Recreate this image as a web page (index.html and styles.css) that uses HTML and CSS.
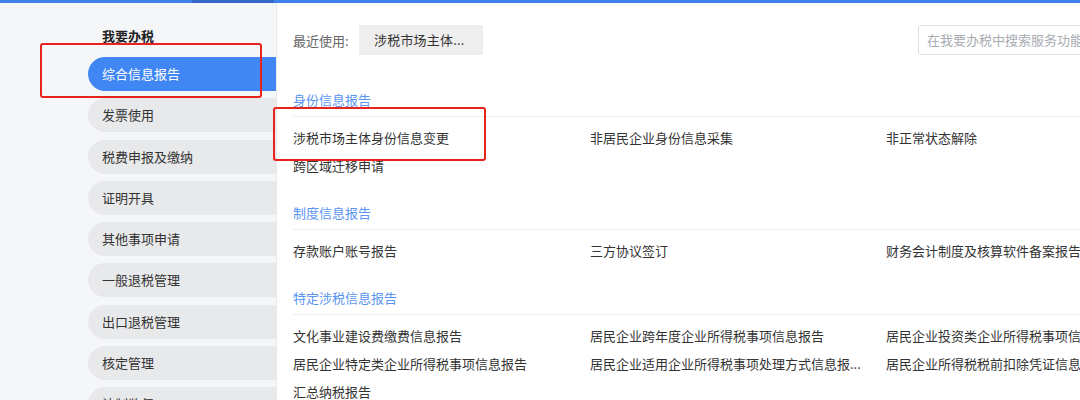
FILE: index.html
```html
<!DOCTYPE html>
<html lang="zh-CN">
<head>
<meta charset="utf-8">
<title>我要办税</title>
<link rel="stylesheet" href="styles.css">
</head>
<body>
<div class="topbar"><div class="topbar-mark"></div></div>
<div class="page">
  <aside class="sidebar">
    <div class="side-title">我要办税</div>
    <ul class="nav">
      <li class="nav-item active">综合信息报告</li>
      <li class="nav-item">发票使用</li>
      <li class="nav-item">税费申报及缴纳</li>
      <li class="nav-item">证明开具</li>
      <li class="nav-item">其他事项申请</li>
      <li class="nav-item">一般退税管理</li>
      <li class="nav-item">出口退税管理</li>
      <li class="nav-item">核定管理</li>
      <li class="nav-item">法制监督</li>
    </ul>
  </aside>
  <main class="main">
    <div class="recent-row">
      <span class="recent-label">最近使用:</span>
      <span class="recent-btn">涉税市场主体...</span>
      <div class="search">在我要办税中搜索服务功能</div>
    </div>

    <section class="group first">
      <h3 class="group-title">身份信息报告</h3>
      <div class="items">
        <span class="item">涉税市场主体身份信息变更</span>
        <span class="item">非居民企业身份信息采集</span>
        <span class="item">非正常状态解除</span>
        <span class="item">跨区域迁移申请</span>
      </div>
    </section>

    <section class="group">
      <h3 class="group-title">制度信息报告</h3>
      <div class="items">
        <span class="item">存款账户账号报告</span>
        <span class="item">三方协议签订</span>
        <span class="item">财务会计制度及核算软件备案报告</span>
      </div>
    </section>

    <section class="group">
      <h3 class="group-title">特定涉税信息报告</h3>
      <div class="items">
        <span class="item">文化事业建设费缴费信息报告</span>
        <span class="item">居民企业跨年度企业所得税事项信息报告</span>
        <span class="item">居民企业投资类企业所得税事项信息报告</span>
        <span class="item">居民企业特定类企业所得税事项信息报告</span>
        <span class="item">居民企业适用企业所得税事项处理方式信息报...</span>
        <span class="item">居民企业所得税税前扣除凭证信息报告</span>
        <span class="item">汇总纳税报告</span>
      </div>
    </section>
  </main>
</div>
<div class="mark mark-nav"></div>
<div class="mark mark-item"></div>
</body>
</html>
```

FILE: styles.css
```css
* { box-sizing: border-box; margin: 0; padding: 0; }

html, body {
  width: 1080px;
  height: 400px;
  overflow: hidden;
}

body {
  font-family: "Noto Sans CJK SC", "Noto Sans", "Liberation Sans", sans-serif;
  font-size: 13px;
  color: #333;
  background: #fff;
  position: relative;
}

.topbar {
  height: 3px;
  background: #4080ea;
  position: relative;
}

.topbar-mark {
  position: absolute;
  left: 192px;
  top: 0;
  width: 82px;
  height: 3px;
  background: #3467c6;
}

.page {
  display: flex;
  height: 397px;
}

.sidebar {
  width: 277px;
  flex: none;
  background: #f5f6f8;
  border-right: 1px solid #e6e7ea;
  padding-top: 23px;
  padding-left: 88px;
}

.side-title {
  font-weight: 700;
  font-size: 13px;
  line-height: 20px;
  padding-left: 14px;
  color: #222;
  margin-bottom: 11px;
}

.nav {
  list-style: none;
  display: flex;
  flex-direction: column;
  gap: 7.3px;
}

.nav-item {
  flex: none;
  height: 34px;
  line-height: 34px;
  padding-left: 14px;
  background: #e8e9eb;
  border-radius: 17px 0 0 17px;
  color: #333;
  white-space: nowrap;
}

.nav-item.active {
  background: #4187f4;
  color: #fff;
}

.main {
  flex: 1;
  min-width: 0;
  padding-left: 16px;
  padding-top: 22px;
  overflow: hidden;
}

.recent-row {
  display: flex;
  align-items: center;
  height: 30px;
  white-space: nowrap;
}

.recent-label {
  flex: none;
  width: 59px;
  color: #666;
}

.recent-btn {
  flex: none;
  margin-left: 7px;
  height: 30px;
  line-height: 30px;
  width: 124px;
  padding-left: 15px;
  background: #eeeeee;
  color: #333;
  letter-spacing: 0.2px;
}

.search {
  flex: none;
  margin-left: 435px;
  width: 200px;
  height: 30px;
  line-height: 28px;
  border: 1px solid #dcdfe6;
  border-radius: 3px;
  padding-left: 8px;
  color: #a8abb2;
}

.group {
  padding-bottom: 23px;
}

.group.first {
  margin-top: 35px;
}

.group-title {
  font-size: 13px;
  font-weight: 400;
  line-height: 20px;
  color: #5a95f2;
  padding-bottom: 6px;
  border-bottom: 1px solid #eeeeee;
  margin-bottom: 7px;
  width: 900px;
}

.items {
  display: grid;
  grid-template-columns: 297px 296px 320px;
  grid-auto-rows: 28px;
  width: 913px;
}

.item {
  line-height: 28px;
  white-space: nowrap;
  overflow: hidden;
  color: #333;
}

.mark {
  position: absolute;
  border: 2px solid #e8231d;
  border-radius: 3px;
  pointer-events: none;
}

.mark-nav {
  left: 40px;
  top: 43px;
  width: 222px;
  height: 55px;
}

.mark-item {
  left: 273px;
  top: 107px;
  width: 213px;
  height: 54px;
}
```
